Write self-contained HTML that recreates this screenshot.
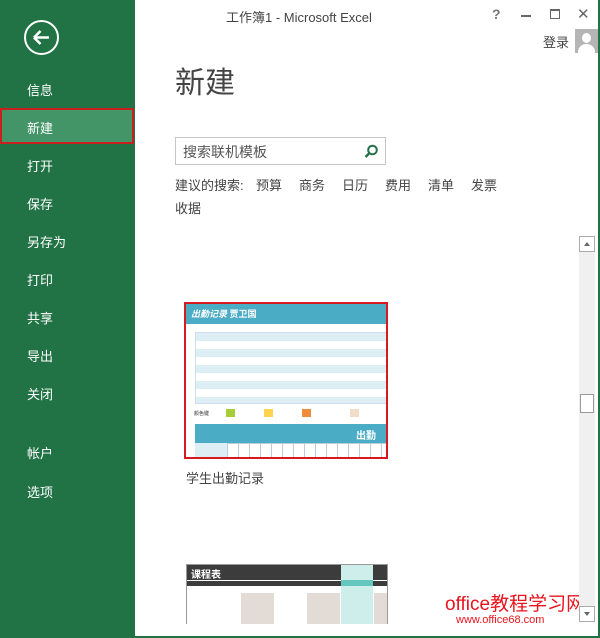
<!DOCTYPE html>
<html><head><meta charset="utf-8"><style>
*{margin:0;padding:0;box-sizing:border-box}
body{width:600px;height:638px;overflow:hidden;background:#fff;font-family:"Liberation Sans","Noto Sans CJK SC",sans-serif;position:relative;color:#444}
.side{position:absolute;left:0;top:0;width:135px;height:638px;background:#217346}
.side .m{position:absolute;left:27px;color:#fff;font-size:13px}
.side .sel{position:absolute;left:0;top:108px;width:134px;height:36px;background:#439467;border:2px solid #c8201e}
.side .back{position:absolute;left:24px;top:20px;width:35px;height:35px;border:2px solid #fff;border-radius:50%}
.abs{position:absolute}
.t{font-size:13px;color:#444}
</style></head><body>
<div class="side">
<div class="back"><svg width="31" height="31" viewBox="0 0 31 31"><path d="M8 15.5H23M8 15.5L14.5 9M8 15.5L14.5 22" stroke="#fff" stroke-width="2.6" fill="none"/></svg></div>
<div class="m" style="top:80px">信息</div>
<div class="sel"></div>
<div class="m" style="top:118px">新建</div>
<div class="m" style="top:156px">打开</div>
<div class="m" style="top:194px">保存</div>
<div class="m" style="top:232px">另存为</div>
<div class="m" style="top:270px">打印</div>
<div class="m" style="top:308px">共享</div>
<div class="m" style="top:346px">导出</div>
<div class="m" style="top:384px">关闭</div>
<div class="m" style="top:443px">帐户</div>
<div class="m" style="top:482px">选项</div>
</div>
<div class="abs" style="right:0;top:0;width:2px;height:638px;background:#217346"></div>
<div class="abs" style="left:0;bottom:0;width:600px;height:2px;background:#217346"></div>
<div class="abs" style="left:226px;top:7px;font-size:13px;color:#444">工作簿1 - Microsoft Excel</div>
<div class="abs" style="left:492px;top:6px;font-size:14px;font-weight:bold;color:#777">?</div>
<div class="abs" style="left:521px;top:15px;width:10px;height:2px;background:#666"></div>
<div class="abs" style="left:550px;top:9px;width:10px;height:10px;border:1px solid #666;border-top-width:2px"></div>
<div class="abs" style="left:577px;top:5px;font-size:15px;color:#666">✕</div>
<div class="abs" style="left:543px;top:32px;font-size:13px;color:#444">登录</div>
<div class="abs" style="left:575px;top:29px;width:23px;height:24px;background:#b5b5b5;overflow:hidden"><div style="position:absolute;left:7px;top:4px;width:9px;height:10px;border-radius:50%;background:#fff"></div><div style="position:absolute;left:3px;top:15px;width:17px;height:14px;border-radius:8px 8px 0 0;background:#fff"></div></div>
<div class="abs" style="left:175px;top:58px;font-size:30px;color:#444">新建</div>
<div class="abs" style="left:175px;top:137px;width:211px;height:28px;border:1px solid #c6c6c6"><span style="position:absolute;left:7px;top:4px;font-size:14px;color:#555">搜索联机模板</span><svg style="position:absolute;right:6px;top:6px" width="15" height="15"><circle cx="8.5" cy="6" r="4.3" stroke="#217346" stroke-width="2" fill="none"/><path d="M5.5 9L1.5 13" stroke="#217346" stroke-width="2.3"/></svg></div>
<div class="abs t" style="left:175px;top:175px">建议的搜索:</div>
<div class="abs t" style="left:256px;top:175px">预算</div>
<div class="abs t" style="left:299px;top:175px">商务</div>
<div class="abs t" style="left:342px;top:175px">日历</div>
<div class="abs t" style="left:385px;top:175px">费用</div>
<div class="abs t" style="left:428px;top:175px">清单</div>
<div class="abs t" style="left:471px;top:175px">发票</div>
<div class="abs t" style="left:175px;top:198px">收据</div>
<div class="abs" style="left:184px;top:302px;width:204px;height:157px;border:2px solid #d71920;background:#fff;overflow:hidden">
<div style="height:20px;background:#4bacc6;color:#fff;font-size:9px;font-weight:bold;padding:3px 5px"><i>出勤记录</i> 贾卫国</div>
<div style="position:absolute;left:9px;top:28px;width:193px;height:72px;background:repeating-linear-gradient(#deeef5 0 8px,#fff 8px 16px);border:1px solid #cde"></div>
<div style="position:absolute;left:8px;top:106px;font-size:5px;color:#333">颜色键</div>
<div style="position:absolute;left:40px;top:105px;width:9px;height:8px;background:#a6ce39"></div>
<div style="position:absolute;left:78px;top:105px;width:9px;height:8px;background:#ffd34f"></div>
<div style="position:absolute;left:116px;top:105px;width:9px;height:8px;background:#f08c3a"></div>
<div style="position:absolute;left:164px;top:105px;width:9px;height:8px;background:#f1dcc9"></div>
<div style="position:absolute;left:9px;top:120px;width:193px;height:19px;background:#4bacc6;color:#fff;font-size:10px;font-weight:bold;text-align:right;padding:3px 12px 0 0">出勤</div>
<div style="position:absolute;left:9px;top:139px;width:193px;height:18px;background:repeating-linear-gradient(90deg,#fff 0 10px,#bcd 10px 11px);border-top:1px solid #bcd"></div>
<div style="position:absolute;left:9px;top:139px;width:32px;height:18px;background:#deeef5"></div>
</div>
<div class="abs t" style="left:186px;top:468px">学生出勤记录</div>
<div class="abs" style="left:186px;top:564px;width:202px;height:60px;border:1px solid #999;border-bottom:none;background:#fff;overflow:hidden">
<div style="height:15px;background:#3c3c3c;color:#fff;font-size:10px;font-weight:bold;padding:1px 4px">课程表</div>
<div style="height:6px;background:#3c3c3c;border-top:1px solid #fff"></div>
<div style="position:absolute;left:154px;top:0;width:32px;height:60px;background:#cdeeeb"></div>
<div style="position:absolute;left:154px;top:15px;width:32px;height:6px;background:#63c7c0"></div>
<div style="position:absolute;left:54px;top:28px;width:33px;height:32px;background:#e3dcd6"></div>
<div style="position:absolute;left:120px;top:28px;width:33px;height:32px;background:#e3dcd6"></div>
<div style="position:absolute;left:187px;top:28px;width:15px;height:32px;background:#e3dcd6"></div>
</div>
<div class="abs" style="left:445px;top:589px;font-size:19px;color:#e8141e;white-space:nowrap">office教程学习网</div>
<div class="abs" style="left:456px;top:614px;font-size:11px;color:#e8141e">www.office68.com</div>
<div class="abs" style="left:579px;top:236px;width:16px;height:386px;background:#f0f0f0"></div>
<div class="abs" style="left:579px;top:236px;width:16px;height:16px;background:#fff;border:1px solid #ababab"><div style="position:absolute;left:4px;top:5px;border:3.5px solid transparent;border-bottom:4px solid #666;border-top:0"></div></div>
<div class="abs" style="left:579px;top:606px;width:16px;height:16px;background:#fff;border:1px solid #ababab"><div style="position:absolute;left:4px;top:5px;border:3.5px solid transparent;border-top:4px solid #666;border-bottom:0"></div></div>
<div class="abs" style="left:580px;top:394px;width:14px;height:19px;background:#fff;border:1px solid #999"></div>
</body></html>
